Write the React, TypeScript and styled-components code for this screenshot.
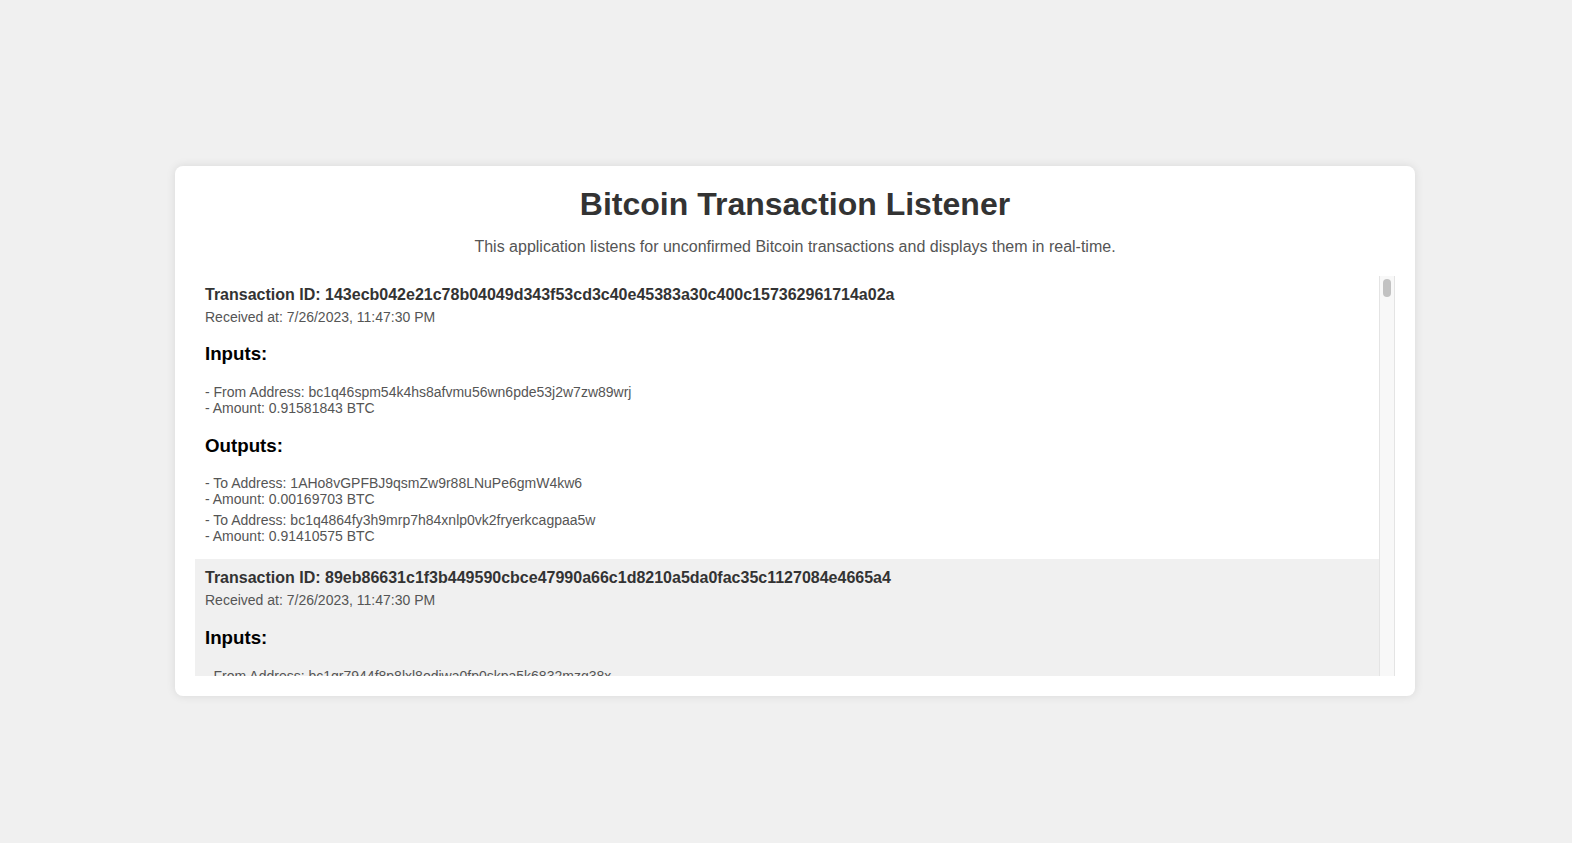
import React from "react";
import styled, { createGlobalStyle } from "styled-components";

const GlobalStyle = createGlobalStyle`
  html, body {
    margin: 0;
    padding: 0;
    background: #f0f0f0;
    font-family: "Liberation Sans", Arial, Helvetica, sans-serif;
  }
`;

const Page = styled.div`
  min-height: 100vh;
  display: flex;
  align-items: center;
  justify-content: center;
  padding-left: 18px;
  padding-top: 18px;
  box-sizing: border-box;
`;

const Card = styled.div`
  width: 1200px;
  padding: 20px;
  background: #ffffff;
  border-radius: 8px;
  box-shadow: 0 0 10px rgba(0, 0, 0, 0.1);
`;

const Title = styled.h1`
  margin: 0 0 15px;
  font-size: 32px;
  font-weight: bold;
  color: #333;
  text-align: center;
`;

const Subtitle = styled.p`
  margin: 0 0 20px;
  font-size: 16px;
  color: #555;
  text-align: center;
`;

const ListFrame = styled.div`
  display: flex;
  height: 400px;
`;

const List = styled.div`
  flex: 1;
  min-width: 0;
  overflow: hidden;
`;

const ScrollTrack = styled.div`
  flex: 0 0 15px;
  box-sizing: border-box;
  padding: 3px 3px 0 3px;
  background: #f8f8f8;
  border-left: 1px solid #e4e4e4;
  border-right: 1px solid #e4e4e4;
`;

const ScrollThumb = styled.div`
  width: 8px;
  height: 18px;
  border-radius: 4px;
  background: #c2c2c2;
`;

const Item = styled.div<{ $alt: boolean }>`
  padding: 10px;
  background: ${(p) => (p.$alt ? "#f0f0f0" : "transparent")};
`;

const TxId = styled.div`
  font-size: 16px;
  font-weight: bold;
  color: #333;
`;

const Received = styled.div`
  margin-top: 5px;
  font-size: 14px;
  color: #555;
`;

const SectionTitle = styled.h3`
  margin: 18.72px 0;
  font-size: 18.72px;
  font-weight: bold;
  color: #000;
`;

const Entry = styled.div`
  margin-bottom: 5px;
  font-size: 14px;
  color: #555;
`;

type Io = { address: string; amount: string };
type Tx = { id: string; time: string; inputs: Io[]; outputs: Io[] };

const transactions: Tx[] = [
  {
    id: "143ecb042e21c78b04049d343f53cd3c40e45383a30c400c157362961714a02a",
    time: "7/26/2023, 11:47:30 PM",
    inputs: [{ address: "bc1q46spm54k4hs8afvmu56wn6pde53j2w7zw89wrj", amount: "0.91581843" }],
    outputs: [
      { address: "1AHo8vGPFBJ9qsmZw9r88LNuPe6gmW4kw6", amount: "0.00169703" },
      { address: "bc1q4864fy3h9mrp7h84xnlp0vk2fryerkcagpaa5w", amount: "0.91410575" },
    ],
  },
  {
    id: "89eb86631c1f3b449590cbce47990a66c1d8210a5da0fac35c1127084e4665a4",
    time: "7/26/2023, 11:47:30 PM",
    inputs: [{ address: "bc1qr7944f8p8lxl8odiwa0fp0skpa5k6832mzg38x", amount: "0.04718254" }],
    outputs: [{ address: "bc1qz3x8m4l6vkp0c2y9e7a5rw8h0tnjd4g6s2f7ku", amount: "0.04710000" }],
  },
];

export default function App() {
  return (
    <>
      <GlobalStyle />
      <Page>
        <Card>
          <Title>Bitcoin Transaction Listener</Title>
          <Subtitle>
            This application listens for unconfirmed Bitcoin transactions and displays them in real-time.
          </Subtitle>
          <ListFrame>
            <List>
              {transactions.map((tx, idx) => (
                <Item key={tx.id} $alt={idx % 2 === 1}>
                  <TxId>Transaction ID: {tx.id}</TxId>
                  <Received>Received at: {tx.time}</Received>
                  <SectionTitle>Inputs:</SectionTitle>
                  {tx.inputs.map((io, k) => (
                    <Entry key={k}>
                      <div>- From Address: {io.address}</div>
                      <div>- Amount: {io.amount} BTC</div>
                    </Entry>
                  ))}
                  <SectionTitle>Outputs:</SectionTitle>
                  {tx.outputs.map((io, k) => (
                    <Entry key={k}>
                      <div>- To Address: {io.address}</div>
                      <div>- Amount: {io.amount} BTC</div>
                    </Entry>
                  ))}
                </Item>
              ))}
            </List>
            <ScrollTrack>
              <ScrollThumb />
            </ScrollTrack>
          </ListFrame>
        </Card>
      </Page>
    </>
  );
}
